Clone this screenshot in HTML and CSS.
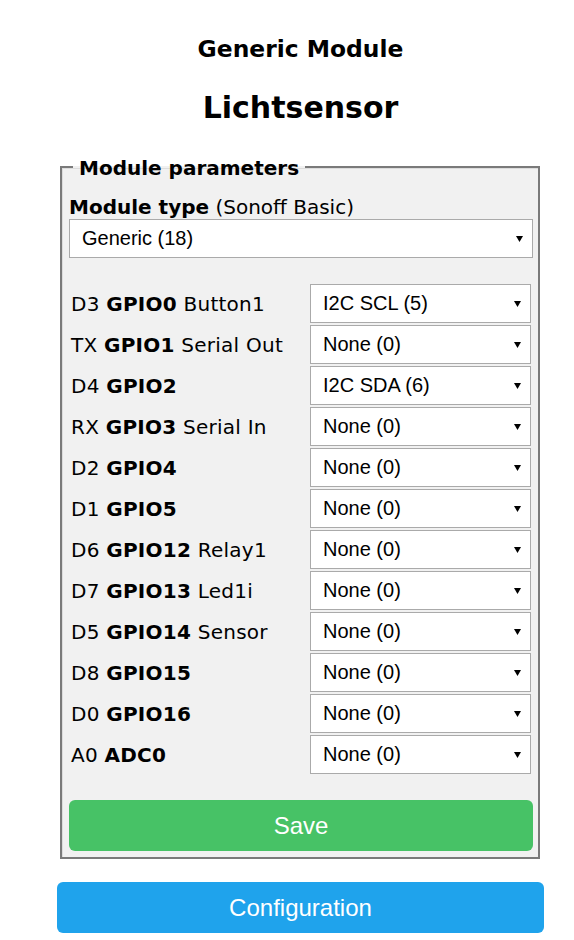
FILE: index.html
```html
<!DOCTYPE html>
<html>
<head>
<meta charset="utf-8">
<title>Generic Module</title>
<link rel="stylesheet" href="styles.css">
</head>
<body>
<div class="page">
  <h3 class="title">Generic Module</h3>
  <h2 class="name">Lichtsensor</h2>
  <fieldset class="params">
    <legend class="legend">Module parameters</legend>
    <p class="mtype"><b>Module type</b> (Sonoff Basic)</p>
    <div class="select wide"><span>Generic (18)</span><svg class="arrow" width="7" height="6" viewBox="0 0 7 6"><path d="M0 0H7L3.5 6Z"/></svg></div>
    <div class="rows">
      <div class="lbl">D3 <b>GPIO0</b> Button1</div>
      <div class="select"><span>I2C SCL (5)</span><svg class="arrow" width="7" height="6" viewBox="0 0 7 6"><path d="M0 0H7L3.5 6Z"/></svg></div>
      <div class="lbl">TX <b>GPIO1</b> Serial Out</div>
      <div class="select"><span>None (0)</span><svg class="arrow" width="7" height="6" viewBox="0 0 7 6"><path d="M0 0H7L3.5 6Z"/></svg></div>
      <div class="lbl">D4 <b>GPIO2</b></div>
      <div class="select"><span>I2C SDA (6)</span><svg class="arrow" width="7" height="6" viewBox="0 0 7 6"><path d="M0 0H7L3.5 6Z"/></svg></div>
      <div class="lbl">RX <b>GPIO3</b> Serial In</div>
      <div class="select"><span>None (0)</span><svg class="arrow" width="7" height="6" viewBox="0 0 7 6"><path d="M0 0H7L3.5 6Z"/></svg></div>
      <div class="lbl">D2 <b>GPIO4</b></div>
      <div class="select"><span>None (0)</span><svg class="arrow" width="7" height="6" viewBox="0 0 7 6"><path d="M0 0H7L3.5 6Z"/></svg></div>
      <div class="lbl">D1 <b>GPIO5</b></div>
      <div class="select"><span>None (0)</span><svg class="arrow" width="7" height="6" viewBox="0 0 7 6"><path d="M0 0H7L3.5 6Z"/></svg></div>
      <div class="lbl">D6 <b>GPIO12</b> Relay1</div>
      <div class="select"><span>None (0)</span><svg class="arrow" width="7" height="6" viewBox="0 0 7 6"><path d="M0 0H7L3.5 6Z"/></svg></div>
      <div class="lbl">D7 <b>GPIO13</b> Led1i</div>
      <div class="select"><span>None (0)</span><svg class="arrow" width="7" height="6" viewBox="0 0 7 6"><path d="M0 0H7L3.5 6Z"/></svg></div>
      <div class="lbl">D5 <b>GPIO14</b> Sensor</div>
      <div class="select"><span>None (0)</span><svg class="arrow" width="7" height="6" viewBox="0 0 7 6"><path d="M0 0H7L3.5 6Z"/></svg></div>
      <div class="lbl">D8 <b>GPIO15</b></div>
      <div class="select"><span>None (0)</span><svg class="arrow" width="7" height="6" viewBox="0 0 7 6"><path d="M0 0H7L3.5 6Z"/></svg></div>
      <div class="lbl">D0 <b>GPIO16</b></div>
      <div class="select"><span>None (0)</span><svg class="arrow" width="7" height="6" viewBox="0 0 7 6"><path d="M0 0H7L3.5 6Z"/></svg></div>
      <div class="lbl">A0 <b>ADC0</b></div>
      <div class="select"><span>None (0)</span><svg class="arrow" width="7" height="6" viewBox="0 0 7 6"><path d="M0 0H7L3.5 6Z"/></svg></div>
    </div>
    <button class="btn save">Save</button>
  </fieldset>
  <button class="btn config">Configuration</button>
</div>
</body>
</html>
```

FILE: styles.css
```css
html, body {
  margin: 0;
  padding: 0;
  background: #fff;
}
body {
  font-family: "DejaVu Sans", Verdana, sans-serif;
  font-size: 20px;
  color: #000;
}
.page {
  width: 487px;
  margin-left: 57px;
  padding-top: 35px;
}
.title {
  margin: 0;
  text-align: center;
  font-size: 23.4px;
  line-height: 28px;
  font-weight: bold;
}
.name {
  margin: 27px 0 0;
  text-align: center;
  font-size: 30px;
  line-height: 36px;
  font-weight: bold;
}
.params {
  margin: 28px 4px 0 3px;
  padding: 0 5px 6px 7px;
  border: 2px solid #7a7a7a;
  box-shadow: inset 1px 1px 0 #dcdcdc;
  background: #f1f1f1;
  min-width: 0;
}
.legend {
  margin-left: 4px;
  padding: 2px 6px 0;
  font-weight: bold;
  font-size: 20px;
  line-height: 24px;
}
.mtype {
  margin: 15px 0 0;
  line-height: 24px;
}
.select {
  box-sizing: border-box;
  height: 39px;
  display: flex;
  align-items: center;
  justify-content: space-between;
  padding: 0 9px 0 12px;
  background: #fff;
  border: 1px solid #aaa;
  font-family: "Liberation Sans", Arial, sans-serif;
  font-size: 20px;
}
.arrow {
  fill: #000;
  flex: none;
}
.rows {
  display: grid;
  grid-template-columns: 241px 221px;
  row-gap: 2px;
  margin-top: 26px;
  align-items: center;
}
.lbl {
  padding-left: 2px;
  white-space: nowrap;
  letter-spacing: 0.25px;
}
.btn {
  display: block;
  width: 100%;
  height: 51px;
  border: 0;
  border-radius: 6px;
  color: #fff;
  font-family: "Liberation Sans", Arial, sans-serif;
  font-size: 24px;
  padding: 0;
}
.save {
  margin-top: 26px;
  background: #47c266;
}
.config {
  margin-top: 23px;
  background: #1fa3ec;
}
```
